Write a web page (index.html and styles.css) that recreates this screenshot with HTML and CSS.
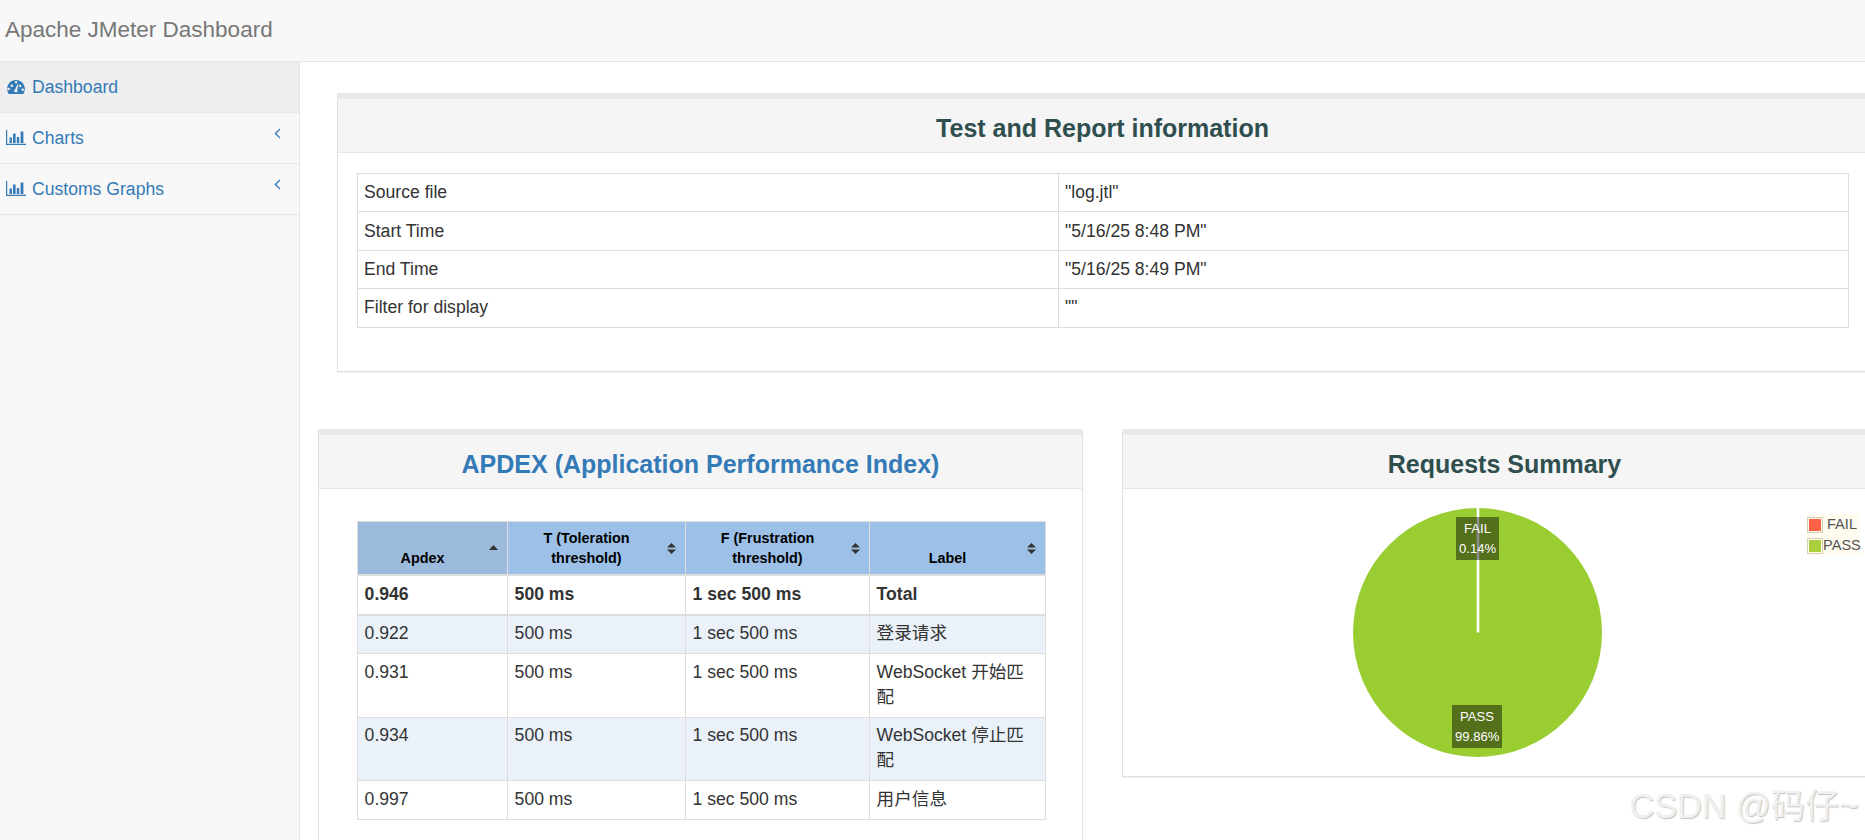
FILE: index.html
```html
<!DOCTYPE html>
<html lang="en">
<head>
<meta charset="utf-8">
<title>Apache JMeter Dashboard</title>
<link rel="stylesheet" href="styles.css">
</head>
<body>
<svg class="defs" width="0" height="0" aria-hidden="true">
  <defs>
    <symbol id="bars" viewBox="0 0 20 15">
      <path d="M0 0h1.2v13.8H20V15H0z"/>
      <path d="M3.5 7.5h2.4V13H3.5zM7 3.5h2.6V13H7zM10.8 7h2.4v6h-2.4zM14.6 1.5H17.4V13h-2.8z"/>
    </symbol>
    <symbol id="angle" viewBox="0 0 7 11">
      <path d="M6 1 1.4 5.5 6 10" fill="none" stroke="currentColor" stroke-width="1.3"/>
    </symbol>
    <symbol id="sort-both" viewBox="0 0 9 11">
      <path d="M4.5 0 9 4.6H0zM0 6.4h9L4.5 11z"/>
    </symbol>
    <symbol id="sort-up" viewBox="0 0 9 5">
      <path d="M4.5 0 9 5H0z"/>
    </symbol>
  </defs>
</svg>

<header class="navbar"><span class="brand">Apache JMeter Dashboard</span></header>

<div class="layout">
  <nav class="sidebar">
    <a class="nav-item active">
      <svg class="nav-icon gauge" viewBox="0 0 19 15"><path fill-rule="evenodd" d="M9.5 0C4.25 0 0 4.2 0 9.5c0 1.9.5 3.6 1.4 5.1.2.3.4.4.7.4h14.8c.3 0 .5-.1.7-.4.9-1.5 1.4-3.2 1.4-5.1C19 4.2 14.75 0 9.5 0ZM8.3 2.6a1.3 1.3 0 1 1 2.5 0 1.3 1.3 0 0 1-2.5 0ZM3 9.6a1.35 1.35 0 1 1 0-.1ZM6.1 5.3a1.35 1.35 0 1 1-.1-.1ZM10.7 10.7c.8.7.7 1.8 0 2.4H8.3c-1-.8-.9-2.3.2-2.9l2.5-5.4c.3-.6 1.3-.2 1 .5ZM15 5.5a1.35 1.35 0 1 1-.1-.1ZM17.7 9.5a1.35 1.35 0 1 1-.1-.1Z"/></svg>
      <span>Dashboard</span>
    </a>
    <a class="nav-item">
      <svg class="nav-icon bars"><use href="#bars"/></svg>
      <span>Charts</span>
      <svg class="angle"><use href="#angle"/></svg>
    </a>
    <a class="nav-item">
      <svg class="nav-icon bars"><use href="#bars"/></svg>
      <span>Customs Graphs</span>
      <svg class="angle"><use href="#angle"/></svg>
    </a>
  </nav>

  <main class="main">
    <section class="panel panel-info">
      <h2 class="panel-head">Test and Report information</h2>
      <div class="info-body">
        <table class="grid info-table">
          <tbody>
            <tr><td class="info-key">Source file</td><td>"log.jtl"</td></tr>
            <tr><td class="info-key">Start Time</td><td>"5/16/25 8:48 PM"</td></tr>
            <tr><td class="info-key">End Time</td><td>"5/16/25 8:49 PM"</td></tr>
            <tr><td class="info-key">Filter for display</td><td>""</td></tr>
          </tbody>
        </table>
      </div>
    </section>

    <div class="row">
      <section class="panel panel-half">
        <h2 class="panel-head link">APDEX (Application Performance Index)</h2>
        <div class="apdex-body">
          <table class="grid apdex-table">
            <colgroup><col class="c1"><col class="c2"><col class="c3"><col class="c4"></colgroup>
            <thead>
              <tr>
                <th class="sorted">Apdex<svg class="sort sort-asc"><use href="#sort-up"/></svg></th>
                <th>T (Toleration threshold)<svg class="sort"><use href="#sort-both"/></svg></th>
                <th>F (Frustration threshold)<svg class="sort"><use href="#sort-both"/></svg></th>
                <th>Label<svg class="sort"><use href="#sort-both"/></svg></th>
              </tr>
            </thead>
            <tbody class="total">
              <tr><td>0.946</td><td>500 ms</td><td>1 sec 500 ms</td><td>Total</td></tr>
            </tbody>
            <tbody>
              <tr class="odd"><td>0.922</td><td>500 ms</td><td>1 sec 500 ms</td><td>登录请求</td></tr>
              <tr><td>0.931</td><td>500 ms</td><td>1 sec 500 ms</td><td>WebSocket 开始匹配</td></tr>
              <tr class="odd"><td>0.934</td><td>500 ms</td><td>1 sec 500 ms</td><td>WebSocket 停止匹配</td></tr>
              <tr><td>0.997</td><td>500 ms</td><td>1 sec 500 ms</td><td>用户信息</td></tr>
            </tbody>
          </table>
        </div>
      </section>

      <section class="panel panel-half">
        <h2 class="panel-head">Requests Summary</h2>
        <div class="pie-body">
          <svg class="pie" viewBox="0 0 249 249">
            <circle class="pie-pass" cx="124.5" cy="124.5" r="124.5"/>
            <path class="pie-fail" d="M125 124.5V0"/>
          </svg>
          <div class="pie-label label-fail">FAIL<br>0.14%</div>
          <div class="pie-label label-pass">PASS<br>99.86%</div>
          <div class="legend">
            <div class="legend-row"><span class="swatch"><i class="fail"></i></span><span class="legend-fail">FAIL</span></div>
            <div class="legend-row"><span class="swatch"><i class="pass"></i></span><span>PASS</span></div>
          </div>
        </div>
      </section>
    </div>
  </main>
</div>
<div class="watermark">CSDN @码仔~</div>
</body>
</html>
```

FILE: styles.css
```css
* { box-sizing: border-box; }
html, body { margin: 0; height: 100%; overflow: hidden; background: #fff; }
body {
  position: relative;
  font: 17.6px/24px "Liberation Sans", "Noto Sans CJK SC", sans-serif;
  color: #333;
  display: flex;
  flex-direction: column;
}
.defs { position: absolute; }

.navbar {
  height: 62px;
  flex: none;
  background: #f8f8f8;
  border-bottom: 1px solid #e7e7e7;
  display: flex;
  align-items: center;
  padding: 0 0 2px 5px;
}
.brand { font-size: 22.5px; color: #777; }

.layout { flex: 1; display: flex; min-height: 0; }

.sidebar {
  width: 300px;
  flex: none;
  background: #f8f8f8;
  border-right: 1px solid #e7e7e7;
}
.nav-item {
  height: 51px;
  display: flex;
  align-items: center;
  padding: 0 18px 1px 6px;
  border-bottom: 1px solid #e7e7e7;
  color: #337ab7;
}
.nav-item.active { background: #eee; }
.nav-icon { fill: #337ab7; flex: none; }
.gauge { width: 18px; height: 14px; margin: 0 7px 0 1px; }
.bars { width: 20px; height: 15px; margin: 0 6px 0 0; }
.angle { width: 7px; height: 11px; margin: 0 0 8px auto; }

.main {
  flex: 1;
  min-width: 0;
  overflow: hidden;
  padding: 31px 0 0 18px;
}
.panel {
  background: #fff;
  border: 1px solid #e0e0e0;
  border-top: 6px solid #e7eaec;
  box-shadow: 0 1px 1px rgba(0, 0, 0, .05);
}
.panel-info { width: 1531px; height: 279px; margin: 0 0 57px 19px; }
.panel-head {
  margin: 0;
  height: 54px;
  background: #f5f5f5;
  border-bottom: 1px solid #e7e7e7;
  font-size: 25px;
  line-height: 58px;
  font-weight: 700;
  text-align: center;
  color: #2f4f4f;
}
.panel-head.link { color: #337ab7; }

.row { display: flex; gap: 39px; align-items: flex-start; width: 1570px; }
.panel-half { width: 765px; flex: none; }

.grid { border-collapse: collapse; table-layout: fixed; width: 100%; }
.grid td, .grid th { border: 1px solid #ddd; }
.grid td { padding: 6.2px 6px 7.2px; vertical-align: top; }

.info-body { padding: 20px 18px 0 19px; }
.info-key { width: 701px; }

.apdex-body { padding: 32px 38px 27px 38px; }
.c1 { width: 150px; }
.c2 { width: 178px; }
.c3 { width: 184px; }
.c4 { width: 176px; }
.apdex-table th {
  position: relative;
  background: #9cc0e7;
  color: #000;
  font-size: 14.4px;
  line-height: 20.6px;
  padding: 5.5px 26px 5.5px 6px;
  vertical-align: bottom;
  text-align: center;
  border-bottom: 2px solid #ddd;
}
.apdex-table th.sorted { background: #9cbbdc; }
.apdex-table td { padding: 5.7px 14px 6.5px 6.6px; line-height: 25.2px; }
.total td { font-weight: 700; border-bottom: 2px solid #ddd; }
.odd td { background: #eaf1f9; }
.sort {
  position: absolute;
  right: 9px;
  top: 21px;
  width: 9px;
  height: 11px;
  fill: #333;
}
.sort-asc { height: 5px; top: 23px; }

.pie-body { position: relative; height: 287px; }
.pie { position: absolute; left: 230px; top: 19px; width: 249px; height: 249px; }
.pie-pass { fill: #9acd32; }
.pie-fail { stroke: #fff; stroke-width: 2.6; fill: none; }
.pie-label {
  position: absolute;
  padding: 2px 3px;
  font-size: 13.1px;
  line-height: 19.7px;
  text-align: center;
  color: #fff;
  background: rgba(0, 0, 0, .45);
}
.label-fail { left: 333px; top: 28px; width: 43px; }
.label-pass { left: 329px; top: 216px; width: 50px; }

.legend {
  position: absolute;
  left: 684px;
  top: 25px;
  width: 53px;
  height: 41px;
  background: rgba(255, 248, 220, .45);
  font-size: 14.6px;
  line-height: 21px;
  color: #545454;
}
.legend-row { display: flex; align-items: center; height: 21px; }
.legend-fail { margin-left: 4px; }
.swatch {
  width: 16px;
  height: 16px;
  flex: none;
  padding: 1px;
  border: 1px solid #d8cfb5;
  display: block;
}
.swatch i { display: block; width: 100%; height: 100%; }
.swatch .fail { background: #ff6347; }
.swatch .pass { background: #a9cf3c; }

.watermark {
  position: absolute;
  right: 6px;
  top: 786px;
  font-size: 34.2px;
  line-height: 40px;
  color: #f0f0f0;
  text-shadow: 1px 1px 1px #c4c4c4;
  white-space: nowrap;
}
```
